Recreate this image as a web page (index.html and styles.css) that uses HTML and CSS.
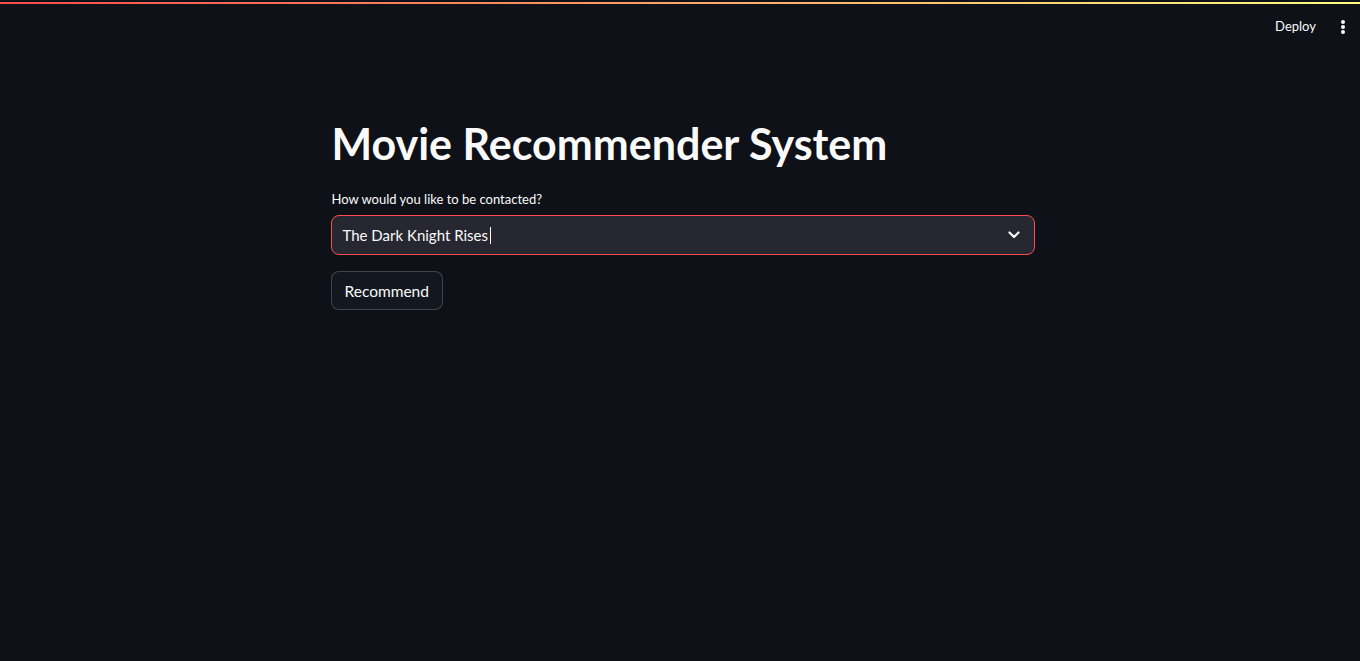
FILE: index.html
```html
<!DOCTYPE html>
<html lang="en">
<head>
<meta charset="utf-8">
<title>Movie Recommender System</title>
<link rel="stylesheet" href="styles.css">
</head>
<body>
<div class="decoration"></div>
<header class="header">
  <span class="deploy">Deploy</span>
  <span class="menu" aria-label="Main menu">
    <svg width="6" height="16" viewBox="0 0 6 16"><circle cx="3" cy="3" r="2" fill="#fafafa"/><circle cx="3" cy="8" r="2" fill="#fafafa"/><circle cx="3" cy="13" r="2" fill="#fafafa"/></svg>
  </span>
</header>
<main class="main">
  <div class="block">
    <h1 class="title">Movie Recommender System</h1>
    <label class="label">How would you like to be contacted?</label>
    <div class="select">
      <span class="value">The Dark Knight Rises<span class="caret"></span></span>
      <svg class="chevron" width="12" height="8" viewBox="0 0 12 8"><polyline points="1.5,1.5 6,6 10.5,1.5" fill="none" stroke="#fafafa" stroke-width="2.2" stroke-linecap="round" stroke-linejoin="round"/></svg>
    </div>
    <div class="actions">
      <button class="btn">Recommend</button>
    </div>
  </div>
</main>
</body>
</html>
```
FILE: styles.css
```css
html, body {
  margin: 0;
  padding: 0;
  background: #0e1117;
  color: #fafafa;
  font-family: "Lato", "Noto Sans", sans-serif;
  height: 100%;
}
.decoration {
  margin-top: 2px;
  height: 2px;
  background: linear-gradient(90deg, #ff4b4b, #fffd80);
}
.header {
  height: 45px;
  display: flex;
  justify-content: flex-end;
  align-items: center;
  padding-right: 14px;
  gap: 24px;
}
.deploy {
  font-size: 13px;
  line-height: 16px;
  color: #fafafa;
  margin-bottom: 2px;
}
.menu {
  display: flex;
  align-items: center;
}
.menu svg { display: block; }
.main {
  display: flex;
  justify-content: center;
  padding-left: 5px;
}
.block {
  width: 704px;
  display: flex;
  flex-direction: column;
  align-items: flex-start;
  padding-top: 69px;
}
.title {
  margin: 0;
  padding-left: 1px;
  font-size: 43px;
  line-height: 52px;
  font-weight: 700;
  letter-spacing: 0;
}
.label {
  margin-top: 19px;
  padding-left: 1px;
  font-size: 13px;
  line-height: 20px;
}
.select {
  margin-top: 6px;
  box-sizing: border-box;
  width: 704px;
  height: 40px;
  border: 1px solid #ff4b4b;
  border-radius: 8px;
  background: #262730;
  display: flex;
  align-items: center;
  justify-content: space-between;
  padding: 0 14px 0 11px;
}
.value {
  font-size: 15px;
  line-height: 20px;
  display: flex;
  align-items: center;
}
.caret {
  display: inline-block;
  width: 1px;
  height: 17px;
  background: #fafafa;
  margin-left: 2px;
}
.chevron { display: block; }
.actions {
  margin-top: 16px;
}
.btn {
  box-sizing: border-box;
  height: 39px;
  padding: 0 13px;
  border: 1px solid rgba(250, 250, 250, 0.2);
  border-radius: 8px;
  background: #131720;
  color: #fafafa;
  font-family: "Lato", "Noto Sans", sans-serif;
  font-size: 15.5px;
}
```
